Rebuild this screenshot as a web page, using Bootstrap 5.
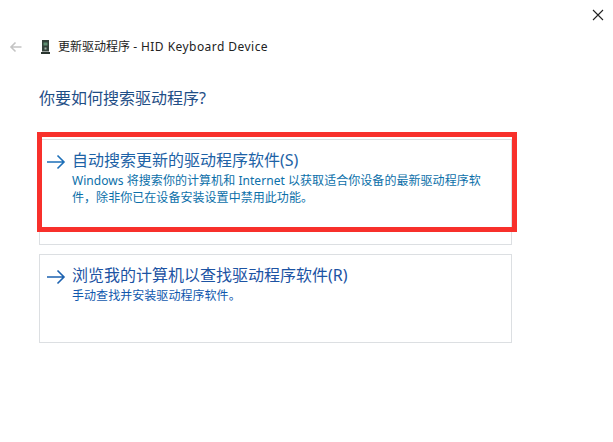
<!DOCTYPE html>
<html lang="zh-CN">
<head>
<meta charset="utf-8">
<title>更新驱动程序</title>
<link rel="stylesheet" href="https://cdn.jsdelivr.net/npm/bootstrap@5.3.0/dist/css/bootstrap.min.css">
<style>
html,body{height:100%;}
body{background:#fff;font-family:"Noto Sans","Noto Sans CJK SC",sans-serif;overflow:hidden;}
.wiz{width:613px;height:442px;position:relative;}
.close-x{height:40px;padding:9px 9px 0 0;}
.head-row{height:14px;padding-left:9px;font-size:12px;line-height:14px;color:#222;}
.lat{letter-spacing:.45px;}
.back-ic{width:13px;margin-right:19px;}
.dev-ic{margin-right:8px;}
.ask{font-size:16px;line-height:22px;color:#1f4e86;margin:33px 0 0 39px;font-weight:400;}
.opts{margin:30px 0 0 39px;width:473px;}
.opt{border:1px solid #dcdfe2;border-radius:0;padding:9px 6px 0 6px;gap:6px;}
.opt-a{height:106px;margin-bottom:9px;}
.opt-b{height:89px;}
.opt-t{font-size:16px;line-height:22px;color:#1d62a6;}
.opt-b .opt-t{color:#1c53a3;}
.opt-d{font-size:12px;line-height:17px;color:#0b6fa9;width:414px;margin-top:1px;letter-spacing:.05px;}
.opt-b .opt-d{color:#1058ae;}
.arrow{margin-top:5px;flex:none;}
.mark-box{position:absolute;left:37px;top:132px;width:480px;height:100px;border:5.5px solid #f8302b;pointer-events:none;}
</style>
</head>
<body>
<div class="wiz">
  <div class="close-x d-flex justify-content-end">
    <svg width="12" height="12" viewBox="0 0 12 12" fill="none" stroke="#222" stroke-width="1.1"><path d="M1 1l10 10M11 1L1 11"/></svg>
  </div>
  <div class="head-row d-flex align-items-center">
    <svg class="back-ic" width="13" height="12" viewBox="0 0 13 12" fill="none" stroke="#c4c4c4" stroke-width="1.6"><path d="M12.500 6H2M6.500 1.500L2 6l4.500 4.500"/></svg>
    <svg class="dev-ic" width="9" height="14" viewBox="0 0 9 14"><rect x="1" y="0" width="7" height="11.500" fill="#33413a"/><rect x="2.500" y="2.500" width="4" height="3" fill="#5f8f72"/><rect x="3.500" y="7.500" width="2" height="2" fill="#9fb0a6"/><rect x="0" y="12" width="9" height="2" fill="#2a3530"/></svg>
    <span>更新驱动程序 <span class="lat">- HID Keyboard Device</span></span>
  </div>
  <h1 class="ask">你要如何搜索驱动程序?</h1>
  <div class="opts">
    <div class="opt opt-a d-flex">
      <svg class="arrow" width="20" height="16" viewBox="0 0 20 16" fill="none" stroke="#1d6fb8" stroke-width="1.6"><path d="M1 8h17M11.500 1.500L18 8l-6.500 6.500"/></svg>
      <div>
        <div class="opt-t">自动搜索更新的驱动程序软件(S)</div>
        <div class="opt-d">Windows 将搜索你的计算机和 Internet 以获取适合你设备的最新驱动程序软件，除非你已在设备安装设置中禁用此功能。</div>
      </div>
    </div>
    <div class="opt opt-b d-flex">
      <svg class="arrow" width="20" height="16" viewBox="0 0 20 16" fill="none" stroke="#1d62b0" stroke-width="1.6"><path d="M1 8h17M11.500 1.500L18 8l-6.500 6.500"/></svg>
      <div>
        <div class="opt-t">浏览我的计算机以查找驱动程序软件(R)</div>
        <div class="opt-d">手动查找并安装驱动程序软件。</div>
      </div>
    </div>
  </div>
  <div class="mark-box"></div>
</div>
<script src="https://cdn.jsdelivr.net/npm/bootstrap@5.3.0/dist/js/bootstrap.bundle.min.js"></script>
</body>
</html>
